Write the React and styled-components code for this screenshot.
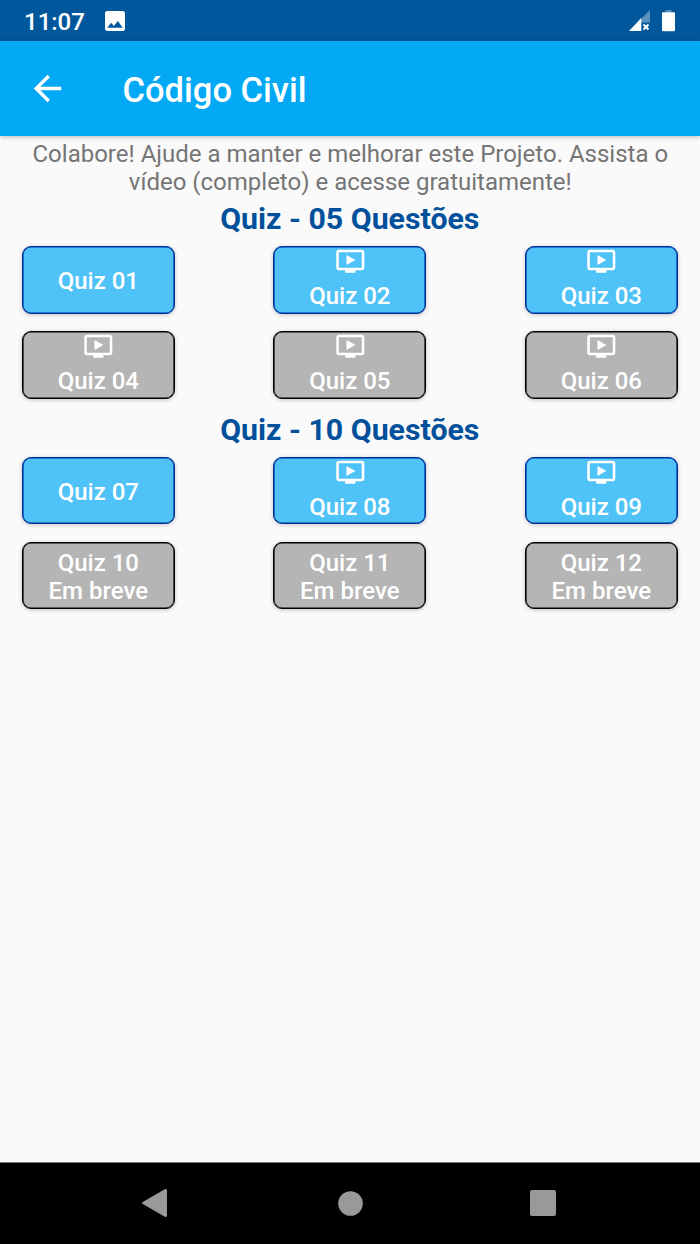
import React from 'react';
import styled, { createGlobalStyle } from 'styled-components';

const GlobalStyle = createGlobalStyle`
  * {
    box-sizing: border-box;
  }

  body {
    margin: 0;
    background: #fafafa;
    font-family: Roboto, sans-serif;
  }
`;

const Screen = styled.div`
  display: flex;
  flex-direction: column;
  height: 1244px;
  width: 700px;
  background: #fafafa;
`;

const StatusBar = styled.div`
  display: flex;
  align-items: center;
  height: 41px;
  padding: 0 25px 0 24px;
  background: #01579b;
  color: #fff;
`;

const Clock = styled.span`
  font-size: 24px;
  font-weight: 500;
  line-height: 28px;
  padding-top: 2px;
  margin-right: 20.3px;
  width: 61px;
  white-space: nowrap;
`;

const StatusIcons = styled.div`
  display: flex;
  gap: 12px;
  margin-left: auto;
`;

const AppBar = styled.header`
  display: flex;
  align-items: center;
  height: 95px;
  padding-left: 27px;
  background: #03a9f4;
  box-shadow: 0 1px 5px rgba(0, 0, 0, 0.25);
  color: #fff;
`;

const BackButton = styled.button`
  display: flex;
  padding: 0;
  border: 0;
  background: none;
  color: inherit;
`;

const Title = styled.h1`
  margin: 3px 0 0 54.5px;
  font-size: 34.5px;
  font-weight: 500;
  line-height: 40px;
`;

const Content = styled.main`
  flex: 1;
  padding: 4px 22.2px 0 21.8px;
`;

const Message = styled.p`
  margin: 0;
  padding-left: 1px;
  color: #757575;
  font-size: 24px;
  line-height: 28px;
  text-align: center;
`;

const SectionTitle = styled.h2`
  margin: 0;
  padding-top: 5.2px;
  height: 50.4px;
  color: #01509b;
  font-size: 30.3px;
  font-weight: 700;
  line-height: 36px;
  text-align: center;
`;

const QuizGrid = styled.div`
  display: grid;
  grid-template-columns: repeat(3, 153px);
  justify-content: space-between;
  row-gap: 17.5px;
  margin-bottom: 7.5px;
`;

const QuizButton = styled.button`
  display: flex;
  flex-direction: column;
  align-items: center;
  justify-content: ${({ $video }) => ($video ? 'flex-start' : 'center')};
  height: 67.5px;
  padding: ${({ $video }) => ($video ? '0' : '2.3px 0 0')};
  border: 1px solid ${({ $locked }) => ($locked ? '#000' : '#01309b')};
  border-radius: 9px;
  background: ${({ $locked }) => ($locked ? '#b5b5b5' : '#4fc3f7')};
  box-shadow: 0 1px 4px rgba(0, 0, 0, 0.22),
    inset 0 0 0 0.6px ${({ $locked }) => ($locked ? '#000' : '#01309b')};
  color: #fff;
  font-family: inherit;
  font-size: 24px;
  font-weight: 500;
  line-height: 28px;
`;

const VideoSvg = styled.svg`
  flex: none;
  margin: -1px 0 5.3px;
`;

const NavBar = styled.nav`
  display: flex;
  justify-content: space-between;
  align-items: center;
  height: 82px;
  padding: 0 144px 1px 142px;
  border-top: 1px solid #777;
  background: #000;
`;

const sections = [
  {
    title: 'Quiz - 05 Questões',
    quizzes: [
      { label: 'Quiz 01' },
      { label: 'Quiz 02', video: true },
      { label: 'Quiz 03', video: true },
      { label: 'Quiz 04', video: true, locked: true },
      { label: 'Quiz 05', video: true, locked: true },
      { label: 'Quiz 06', video: true, locked: true },
    ],
  },
  {
    title: 'Quiz - 10 Questões',
    quizzes: [
      { label: 'Quiz 07' },
      { label: 'Quiz 08', video: true },
      { label: 'Quiz 09', video: true },
      { label: 'Quiz 10', soon: true, locked: true },
      { label: 'Quiz 11', soon: true, locked: true },
      { label: 'Quiz 12', soon: true, locked: true },
    ],
  },
];

const VideoIcon = () => (
  <VideoSvg width="30.6" height="30.6" viewBox="0 0 24 24" fill="currentColor">
    <path d="M21 3H3c-1.1 0-2 .9-2 2v12c0 1.1.9 2 2 2h5v2h8v-2h5c1.1 0 2-.9 2-2V5c0-1.1-.9-2-2-2zm0 14H3V5h18v12zM9 7v8l7-4z" />
  </VideoSvg>
);

const PictureIcon = () => (
  <svg width="20" height="20" viewBox="3 3 18 18" fill="currentColor">
    <path d="M21 19V5c0-1.1-.9-2-2-2H5c-1.1 0-2 .9-2 2v14c0 1.1.9 2 2 2h14c1.1 0 2-.9 2-2zM8.5 13.5l2.5 3.01L14.5 12l4.5 6H5l3.5-4.5z" />
  </svg>
);

const SignalIcon = () => (
  <svg width="21" height="22" viewBox="0 0 21 22" fill="currentColor">
    <path d="M21 0v12.5h-9V9z" opacity=".35" />
    <path d="M0 21L12.3 8v13z" />
    <path
      d="M14.5 14.5l5 5M19.5 14.5l-5 5"
      stroke="currentColor"
      strokeWidth="2"
    />
  </svg>
);

const BatteryIcon = () => (
  <svg width="13" height="22" viewBox="0 0 13 22" fill="currentColor">
    <path d="M3.5 0h6v2.5h-6z" opacity=".35" />
    <rect y="2.3" width="13" height="19" rx="1.2" />
  </svg>
);

const Quiz = ({ label, video, soon, locked }) => (
  <QuizButton type="button" $video={video} $locked={locked}>
    {video && <VideoIcon />}
    <span>{label}</span>
    {soon && <span>Em breve</span>}
  </QuizButton>
);

const App = () => (
  <>
    <GlobalStyle />
    <Screen>
      <StatusBar>
        <Clock>11:07</Clock>
        <PictureIcon />
        <StatusIcons>
          <SignalIcon />
          <BatteryIcon />
        </StatusIcons>
      </StatusBar>

      <AppBar>
        <BackButton type="button" aria-label="Voltar">
          <svg width="41" height="41" viewBox="0 0 24 24" fill="currentColor">
            <path d="M20 11H7.83l5.59-5.59L12 4l-8 8 8 8 1.41-1.41L7.83 13H20v-2z" />
          </svg>
        </BackButton>
        <Title>Código Civil</Title>
      </AppBar>

      <Content>
        <Message>
          Colabore! Ajude a manter e melhorar este Projeto. Assista o vídeo
          (completo) e acesse gratuitamente!
        </Message>

        {sections.map(({ title, quizzes }) => (
          <section key={title}>
            <SectionTitle>{title}</SectionTitle>
            <QuizGrid>
              {quizzes.map((quiz) => (
                <Quiz key={quiz.label} {...quiz} />
              ))}
            </QuizGrid>
          </section>
        ))}
      </Content>

      <NavBar>
        <svg width="25" height="28" viewBox="0 0 25 28" fill="#999">
          <path d="M.8 13L22.8.3Q25-.5 25 1.8V26.2Q25 28.5 22.8 27.7L.8 15Q-.6 14 .8 13z" />
        </svg>
        <svg width="28" height="25" viewBox="-3 0 28 25" fill="#999">
          <circle cx="12.5" cy="12.5" r="12.3" />
        </svg>
        <svg width="26" height="26" viewBox="0 0 26 26" fill="#999">
          <rect width="26" height="26" rx="2" />
        </svg>
      </NavBar>
    </Screen>
  </>
);

export default App;
